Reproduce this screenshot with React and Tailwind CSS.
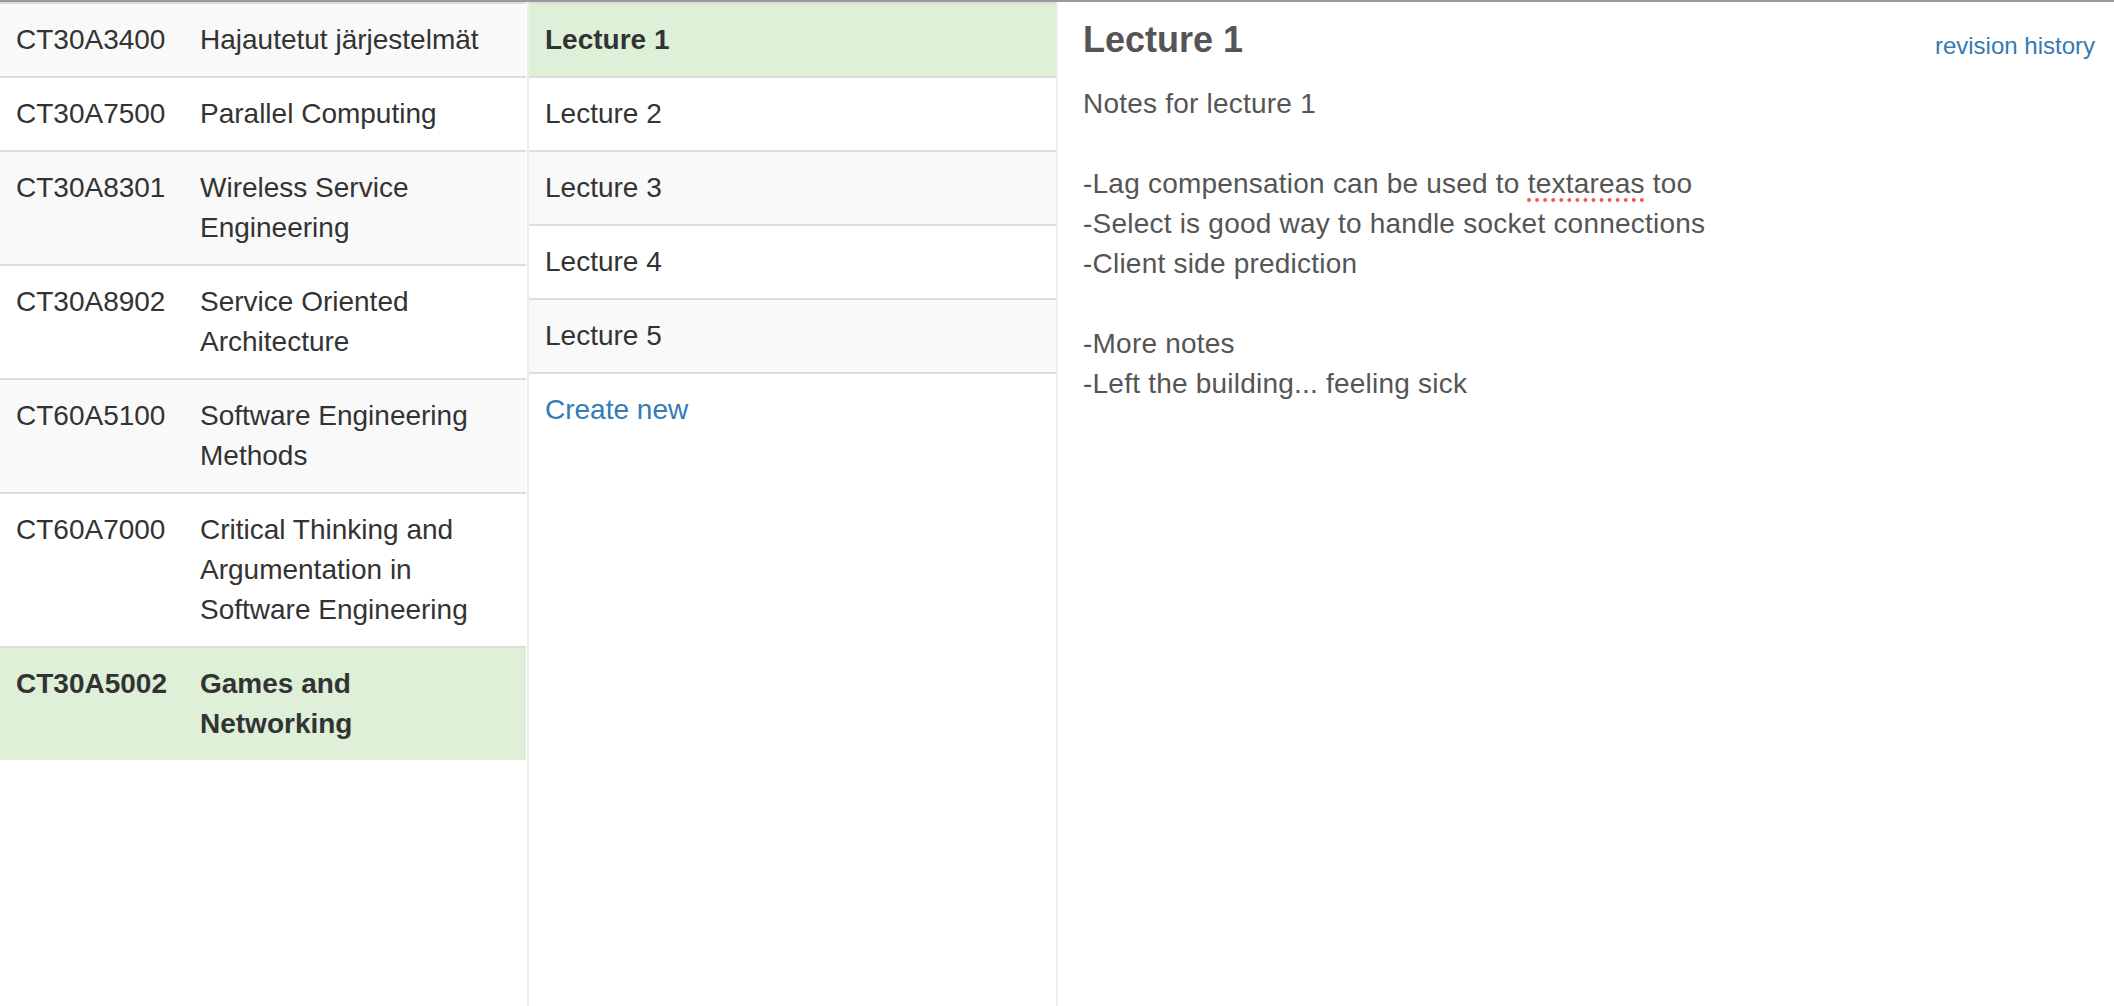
import React from "react";

const courses = [
  { code: "CT30A3400", lines: ["Hajautetut järjestelmät"], bg: "bg-[#f9f9f9]" },
  { code: "CT30A7500", lines: ["Parallel Computing"], bg: "bg-white" },
  { code: "CT30A8301", lines: ["Wireless Service", "Engineering"], bg: "bg-[#f9f9f9]" },
  { code: "CT30A8902", lines: ["Service Oriented", "Architecture"], bg: "bg-white" },
  { code: "CT60A5100", lines: ["Software Engineering", "Methods"], bg: "bg-[#f9f9f9]" },
  { code: "CT60A7000", lines: ["Critical Thinking and", "Argumentation in", "Software Engineering"], bg: "bg-white" },
  { code: "CT30A5002", lines: ["Games and", "Networking"], bg: "bg-[#dff0d8]", active: true },
];

const lectures = [
  { name: "Lecture 1", bg: "bg-[#dff0d8]", active: true },
  { name: "Lecture 2", bg: "bg-white" },
  { name: "Lecture 3", bg: "bg-[#f9f9f9]" },
  { name: "Lecture 4", bg: "bg-white" },
  { name: "Lecture 5", bg: "bg-[#f9f9f9]" },
];

export default function App() {
  return (
    <div className="flex h-[1006px] w-full flex-col overflow-hidden bg-white font-['Liberation_Sans',Arial,sans-serif] text-[28px] leading-[40px] text-[#333]">
      <div className="h-[2px] w-full shrink-0 bg-[#9a9a9a]" />
      <div className="flex flex-1">
        {/* Courses */}
        <div className="w-[527px] shrink-0">
          <div className="w-[526px]">
            {courses.map((c) => (
              <div
                key={c.code}
                className={`flex border-t-2 border-[#ddd] ${c.bg} ${c.active ? "font-bold" : ""}`}
              >
                <div className="w-[184px] shrink-0 px-4 py-4">{c.code}</div>
                <div className="flex-1 px-4 py-4">
                  {c.lines.map((l) => (
                    <div key={l}>{l}</div>
                  ))}
                </div>
              </div>
            ))}
          </div>
        </div>

        {/* Lectures */}
        <div className="w-[531px] shrink-0 border-x-2 border-[#eee]">
          {lectures.map((l) => (
            <div
              key={l.name}
              className={`border-t-2 border-[#ddd] px-4 py-4 ${l.bg} ${l.active ? "font-bold" : ""}`}
            >
              {l.name}
            </div>
          ))}
          <div className="border-t-2 border-[#ddd] bg-white px-4 py-4">
            <a className="text-[#337ab7]">Create new</a>
          </div>
        </div>

        {/* Notes */}
        <div className="flex-1 pl-[25px] pr-[19px]">
          <div className="flex h-[58px] items-start justify-between">
            <h1 className="mt-[18px] text-[36px] font-bold leading-[40px] text-[#555]">Lecture 1</h1>
            <a className="mt-[27px] text-[24px] leading-[34px] text-[#337ab7]">revision history</a>
          </div>
          <div className="mt-[24px] text-[28px] leading-[40px] tracking-[0.22px] text-[#555]">
            <div>Notes for lecture 1</div>
            <div className="h-[40px]" />
            <div>
              -Lag compensation can be used to{" "}
              <span className="underline decoration-[#ee5a52] decoration-dotted decoration-[4px] underline-offset-[5px]">
                textareas
              </span>{" "}
              too
            </div>
            <div>-Select is good way to handle socket connections</div>
            <div>-Client side prediction</div>
            <div className="h-[40px]" />
            <div>-More notes</div>
            <div>-Left the building... feeling sick</div>
          </div>
        </div>
      </div>
    </div>
  );
}
